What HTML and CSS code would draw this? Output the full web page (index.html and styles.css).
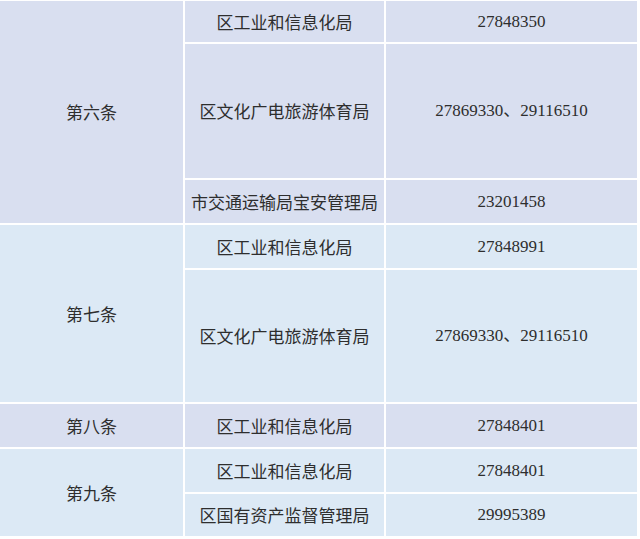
FILE: index.html
```html
<!DOCTYPE html>
<html lang="zh-CN">
<head>
<meta charset="utf-8">
<link rel="stylesheet" href="styles.css">
</head>
<body>
<table class="contacts">
  <colgroup>
    <col class="c1"><col class="c2"><col class="c3">
  </colgroup>
  <tbody class="g-lav">
    <tr class="r-a">
      <td rowspan="3" class="art">第六条</td>
      <td class="dept">区工业和信息化局</td>
      <td class="num">27848350</td>
    </tr>
    <tr class="r-tall1">
      <td class="dept">区文化广电旅游体育局</td>
      <td class="num">27869330、29116510</td>
    </tr>
    <tr class="r-c">
      <td class="dept">市交通运输局宝安管理局</td>
      <td class="num">23201458</td>
    </tr>
  </tbody>
  <tbody class="g-blue">
    <tr class="r-c">
      <td rowspan="2" class="art">第七条</td>
      <td class="dept">区工业和信息化局</td>
      <td class="num">27848991</td>
    </tr>
    <tr class="r-tall2">
      <td class="dept">区文化广电旅游体育局</td>
      <td class="num">27869330、29116510</td>
    </tr>
  </tbody>
  <tbody class="g-lav">
    <tr class="r-c">
      <td class="art">第八条</td>
      <td class="dept">区工业和信息化局</td>
      <td class="num">27848401</td>
    </tr>
  </tbody>
  <tbody class="g-blue">
    <tr class="r-c">
      <td rowspan="2" class="art">第九条</td>
      <td class="dept">区工业和信息化局</td>
      <td class="num">27848401</td>
    </tr>
    <tr class="r-h">
      <td class="dept">区国有资产监督管理局</td>
      <td class="num">29995389</td>
    </tr>
  </tbody>
</table>
</body>
</html>
```
FILE: styles.css
```css
html, body {
  margin: 0;
  padding: 0;
  background: #ffffff;
}
body {
  font-family: "Noto Sans CJK SC", sans-serif;
  color: #2e2e2e;
  overflow: hidden;
}
.contacts {
  border-collapse: separate;
  border-spacing: 2px;
  table-layout: fixed;
  width: 641px;
  margin: -1px 0 0 -2px;
}
.c1 { width: 183px; }
.c2 { width: 199px; }
.c3 { width: 251px; }
.contacts td {
  padding: 0;
  text-align: center;
  vertical-align: middle;
  font-size: 17px;
  line-height: 20px;
  white-space: nowrap;
}
.g-lav td { background: #d9dff0; }
.g-blue td { background: #dce9f5; }
.r-a td:not([rowspan]) { height: 41px; }
.r-tall1 td { height: 134px; }
.r-c td:not([rowspan]) { height: 43px; }
.r-tall2 td { height: 132px; }
.r-h td { height: 42px; }
.art { padding-top: 2px; }
.num {
  font-family: "Liberation Serif", "Noto Sans CJK SC", serif;
  font-size: 17px;
}
```
